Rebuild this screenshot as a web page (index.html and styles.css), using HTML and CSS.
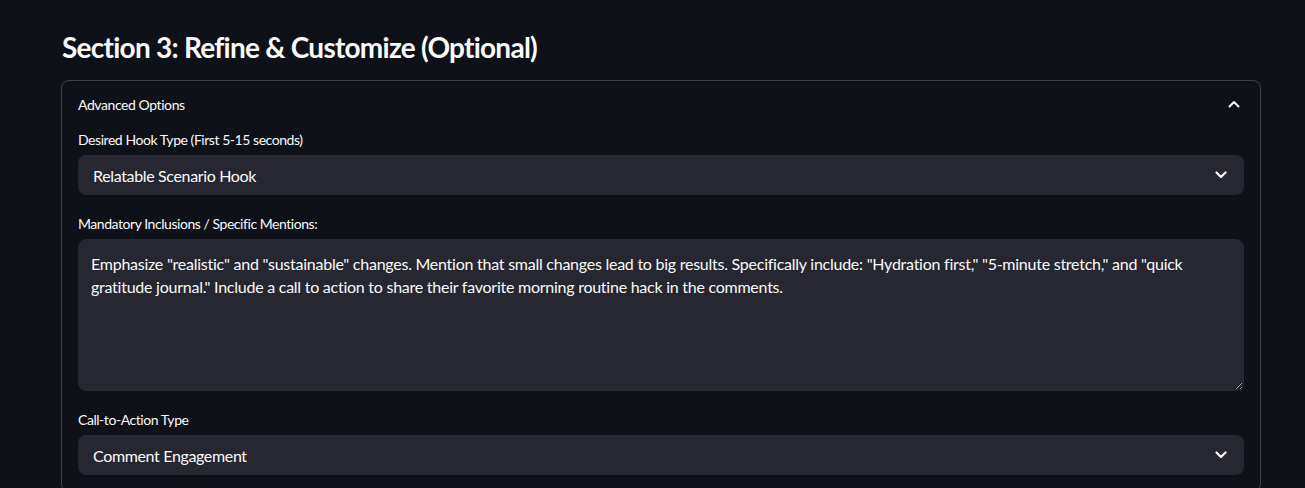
FILE: index.html
```html
<!DOCTYPE html>
<html lang="en">
<head>
<meta charset="utf-8">
<title>Section 3</title>
<link rel="stylesheet" href="styles.css">
</head>
<body>
<main class="main">
  <h3 class="title">Section 3: Refine &amp; Customize (Optional)</h3>
  <section class="expander">
    <div class="summary">
      <span>Advanced Options</span>
      <svg class="chev" width="12" height="8" viewBox="0 0 12 8"><path d="M1.5 6.5 L6 2 L10.5 6.5" fill="none" stroke="#fafafa" stroke-width="2" stroke-linecap="round" stroke-linejoin="round"/></svg>
    </div>
    <div class="content">
      <div class="field">
        <label class="label">Desired Hook Type (First 5-15 seconds)</label>
        <div class="select">
          <span>Relatable Scenario Hook</span>
          <svg class="chev" width="12" height="8" viewBox="0 0 12 8"><path d="M1.5 1.5 L6 6 L10.5 1.5" fill="none" stroke="#fafafa" stroke-width="2.2" stroke-linecap="round" stroke-linejoin="round"/></svg>
        </div>
      </div>
      <div class="field">
        <label class="label">Mandatory Inclusions / Specific Mentions:</label>
        <textarea class="textarea" readonly>Emphasize "realistic" and "sustainable" changes. Mention that small changes lead to big results. Specifically include: "Hydration first," "5-minute stretch," and "quick gratitude journal." Include a call to action to share their favorite morning routine hack in the comments.</textarea>
      </div>
      <div class="field">
        <label class="label">Call-to-Action Type</label>
        <div class="select">
          <span>Comment Engagement</span>
          <svg class="chev" width="12" height="8" viewBox="0 0 12 8"><path d="M1.5 1.5 L6 6 L10.5 1.5" fill="none" stroke="#fafafa" stroke-width="2.2" stroke-linecap="round" stroke-linejoin="round"/></svg>
        </div>
      </div>
    </div>
  </section>
</main>
</body>
</html>
```
FILE: styles.css
```css
html, body {
  margin: 0;
  padding: 0;
  background: #0e1117;
  color: #fafafa;
  font-family: Lato, "Noto Sans", sans-serif;
  overflow: hidden;
  color-scheme: dark;
}
.main {
  padding: 26px 44px 0 61px;
  display: flex;
  flex-direction: column;
}
.title {
  margin: 0 0 12px 1px;
  font-size: 28px;
  line-height: 42px;
  font-weight: 700;
  letter-spacing: -0.75px;
  height: 42px;
}
.expander {
  width: 1198px;
  border: 1px solid rgba(250, 250, 250, 0.2);
  border-radius: 8px;
}
.summary {
  height: 46px;
  padding: 0 20px 0 16px;
  display: flex;
  align-items: center;
  justify-content: space-between;
  font-size: 14px;
  letter-spacing: -0.42px;
}
.content {
  padding: 0 16px 16px;
  display: flex;
  flex-direction: column;
  gap: 16px;
}
.field {
  display: flex;
  flex-direction: column;
}
.label {
  height: 24px;
  margin-bottom: 4px;
  display: flex;
  align-items: center;
  font-size: 14px;
  letter-spacing: -0.45px;
}
.select {
  height: 40px;
  box-sizing: border-box;
  background: #262730;
  border-radius: 8px;
  padding: 0 17px 0 15px;
  display: flex;
  align-items: center;
  justify-content: space-between;
  font-size: 16px;
  letter-spacing: -0.35px;
}
.textarea {
  display: block;
  height: 152px;
  box-sizing: border-box;
  background: #262730;
  color: #fafafa;
  border: 1px solid #262730;
  border-radius: 8px;
  padding: 12px 12px;
  font-family: inherit;
  font-size: 16px;
  line-height: 23px;
  letter-spacing: -0.25px;
  resize: vertical;
  outline: none;
}
```
